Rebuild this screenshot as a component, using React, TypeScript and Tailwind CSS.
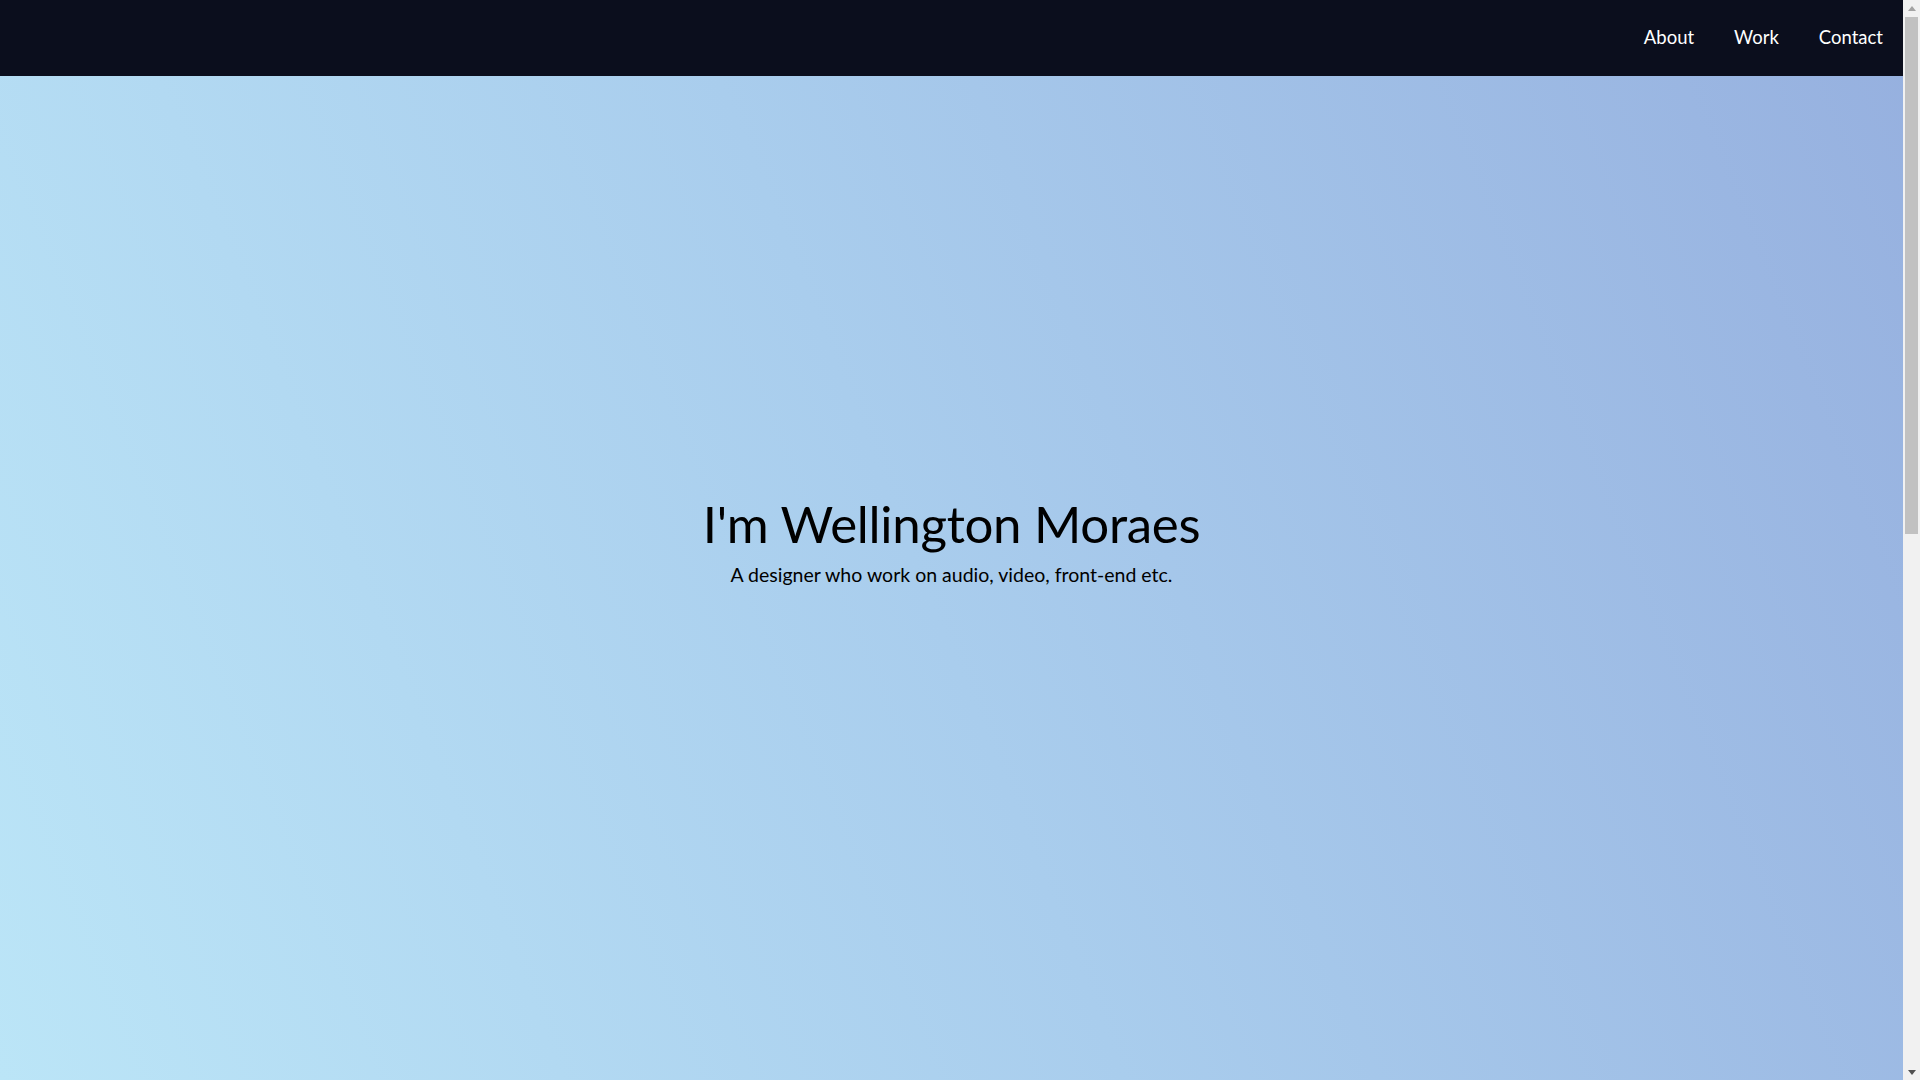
const links = ["About", "Work", "Contact"];

function Scrollbar() {
  return (
    <div className="w-[17px] h-screen shrink-0 bg-[#f1f1f1] flex flex-col items-center">
      <div className="h-[17px] w-full flex items-center justify-center">
        <svg width="8" height="5" viewBox="0 0 8 5">
          <path d="M4 0 L8 5 L0 5 Z" fill="#a3a3a3" />
        </svg>
      </div>
      <div className="w-[13px] h-[517px] bg-[#c1c1c1]" />
      <div className="flex-1" />
      <div className="h-4 w-full flex items-center justify-center">
        <svg width="8" height="5" viewBox="0 0 8 5">
          <path d="M0 0 L8 0 L4 5 Z" fill="#505050" />
        </svg>
      </div>
    </div>
  );
}

export default function App() {
  return (
    <div className="h-screen flex overflow-hidden font-['Lato',sans-serif]">
      <div className="relative flex-1 h-screen">
        <nav className="absolute top-0 left-0 right-0 z-10 h-[76px] bg-[#0b0e1d] flex items-center justify-end pr-5">
          <ul className="flex items-center gap-10">
            {links.map((l) => (
              <li key={l}>
                <a href={`#${l.toLowerCase()}`} className="text-white text-[18.5px] leading-none">
                  {l}
                </a>
              </li>
            ))}
          </ul>
        </nav>

        <section className="h-full bg-[linear-gradient(68deg,#bbe5f7,#a9cded_48%,#96b0df)] flex flex-col items-center justify-center text-black">
          <h1 className="text-[51px] leading-[1.2] tracking-[-0.3px]">I'm Wellington Moraes</h1>
          <p className="text-[19.5px] leading-[1.3] mt-2">A designer who work on audio, video, front-end etc.</p>
        </section>
      </div>
      <Scrollbar />
    </div>
  );
}
